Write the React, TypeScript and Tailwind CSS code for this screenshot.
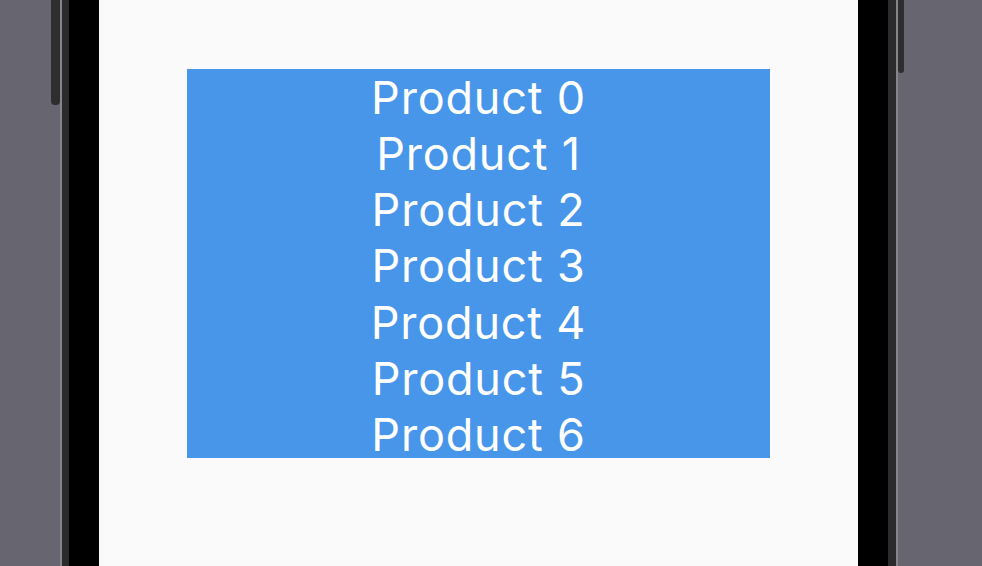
export default function App() {
  const products = Array.from({ length: 7 }, (_, i) => `Product ${i}`)

  return (
    <div className="relative flex h-[566px] w-[982px] overflow-hidden bg-[#676570]">
      {/* side buttons */}
      <div className="absolute left-[51px] top-0 h-[105px] w-[9px] rounded-b-sm bg-[#2e2e30]" />
      <div className="absolute left-[898px] top-0 h-[73px] w-[6px] rounded-b-sm bg-[#2e2e30]" />

      {/* phone frame */}
      <div className="ml-[60px] flex h-full">
        <div className="w-[2px] bg-[#85858a]" />
        <div className="w-[7px] bg-[#2b2b2d]" />
        <div className="w-[30px] bg-black" />
        <div className="flex w-[759px] justify-center bg-[#fafafa] pt-[69px]">
          <div
            className="flex h-[389px] w-[583px] flex-col items-center justify-between bg-[#4896ea] pt-[6px] text-[45px] leading-[46px] tracking-[0.8px] text-white"
            style={{ fontFamily: 'Inter, "Open Sans", sans-serif' }}
          >
            {products.map((p) => (
              <div key={p}>{p}</div>
            ))}
          </div>
        </div>
        <div className="w-[30px] bg-black" />
        <div className="w-[8px] bg-[#2b2b2d]" />
        <div className="w-[2px] bg-[#85858a]" />
      </div>
    </div>
  )
}
